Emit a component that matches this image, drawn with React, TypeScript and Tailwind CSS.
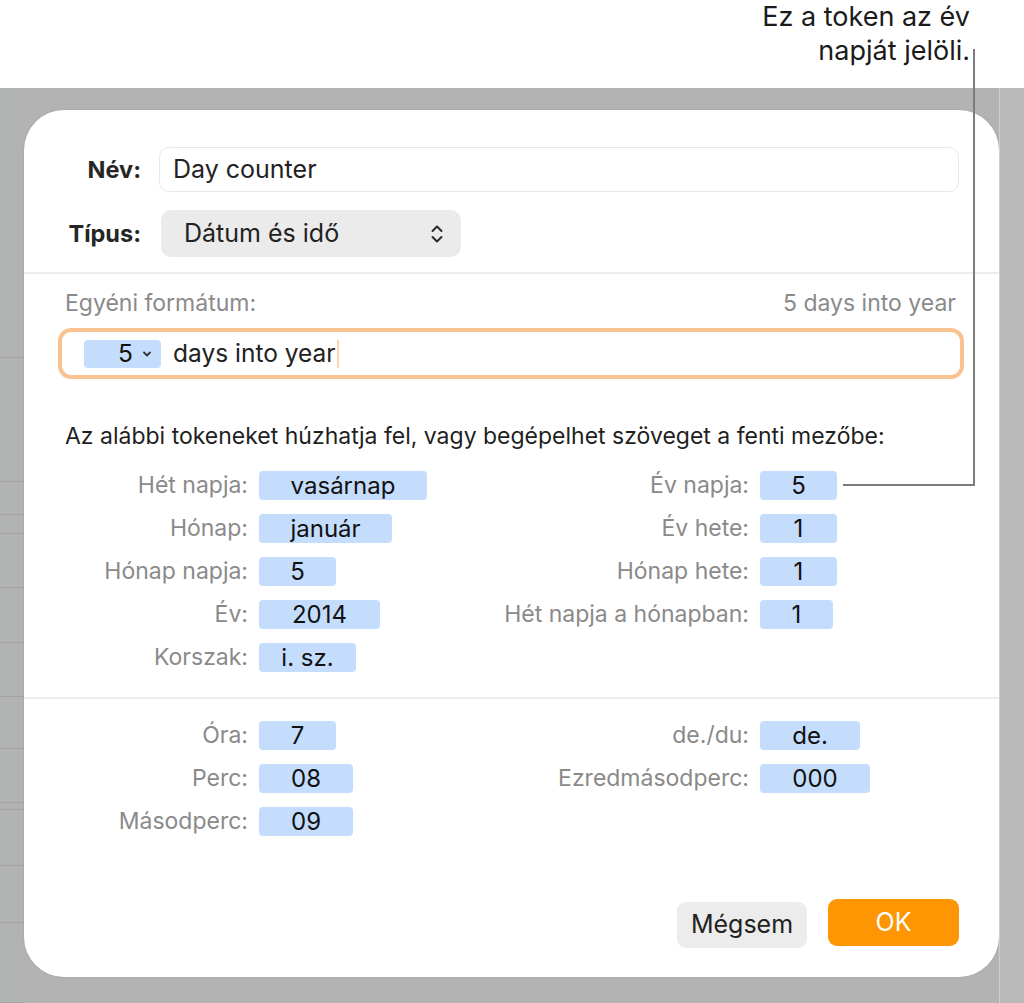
import React from "react";

const font = { fontFamily: "Inter, 'Noto Sans', sans-serif" };

type Row = { label: string; token: string; w: string };

const dateLeft: Row[] = [
  { label: "Hét napja:", token: "vasárnap", w: "w-[168px]" },
  { label: "Hónap:", token: "január", w: "w-[133px]" },
  { label: "Hónap napja:", token: "5", w: "w-[77px]" },
  { label: "Év:", token: "2014", w: "w-[121px]" },
  { label: "Korszak:", token: "i. sz.", w: "w-[97px]" },
];

const dateRight: Row[] = [
  { label: "Év napja:", token: "5", w: "w-[77px]" },
  { label: "Év hete:", token: "1", w: "w-[77px]" },
  { label: "Hónap hete:", token: "1", w: "w-[77px]" },
  { label: "Hét napja a hónapban:", token: "1", w: "w-[73px]" },
];

const timeLeft: Row[] = [
  { label: "Óra:", token: "7", w: "w-[77px]" },
  { label: "Perc:", token: "08", w: "w-[94px]" },
  { label: "Másodperc:", token: "09", w: "w-[94px]" },
];

const timeRight: Row[] = [
  { label: "de./du:", token: "de.", w: "w-[100px]" },
  { label: "Ezredmásodperc:", token: "000", w: "w-[110px]" },
];

// background row lines in the left strip
const stripRows = [270, 124, 33, 19, 54, 55, 54, 52, 54, 7, 56, 57, 80];

function TokenRow({ row, labelW }: { row: Row; labelW: string }) {
  return (
    <div className="flex h-[29px] items-center">
      <div className={`${labelW} shrink-0 whitespace-nowrap text-right text-[23px] leading-[29px] text-[#8a8a8a]`}>
        {row.label}
      </div>
      <div
        className={`ml-[11px] flex h-[29px] ${row.w} items-center justify-center rounded-[4px] bg-[#c4ddfc] text-[24px] leading-[29px] text-[#111]`}
      >
        {row.token}
      </div>
    </div>
  );
}

function TokenColumns({ left, right }: { left: Row[]; right: Row[] }) {
  return (
    <div className="flex">
      <div className="flex w-[480px] flex-col gap-[14px]">
        {left.map((r) => (
          <TokenRow key={r.label} row={r} labelW="w-[224px]" />
        ))}
      </div>
      <div className="flex flex-col gap-[14px]">
        {right.map((r) => (
          <TokenRow key={r.label} row={r} labelW="w-[245px]" />
        ))}
      </div>
    </div>
  );
}

function UpDown() {
  return (
    <svg width="14" height="22" viewBox="0 0 14 22" fill="none" stroke="#2a2a2a" strokeWidth="2" strokeLinecap="round" strokeLinejoin="round">
      <path d="M2.5 8 7 3.5 11.5 8" />
      <path d="M2.5 14 7 18.5 11.5 14" />
    </svg>
  );
}

function SmallDown() {
  return (
    <svg width="10" height="8" viewBox="0 0 10 8" fill="none" stroke="#333" strokeWidth="1.8" strokeLinecap="round" strokeLinejoin="round">
      <path d="M2 2.5 5 5.5 8 2.5" />
    </svg>
  );
}

export default function App() {
  return (
    <div className="relative flex h-[1003px] w-[1024px] flex-col overflow-hidden bg-white" style={font}>
      {/* callout */}
      <div className="flex h-[88px] shrink-0 justify-end pr-[54px]">
        <div className="text-right text-[27px] leading-[34px] text-[#1b1b1b]">
          <div>Ez a token az év</div>
          <div>napját jelöli.</div>
        </div>
      </div>

      {/* background + dialog */}
      <div className="flex flex-1 bg-[#b3b3b3]">
        <div className="flex w-[24px] flex-col bg-[#b1b2b2]">
          {stripRows.map((h, i) => (
            <div key={i} className="border-b border-[#a3a3a3]" style={{ height: h }} />
          ))}
        </div>

        <div className="mt-[22px] flex h-[867px] w-[975px] flex-col rounded-[40px] bg-white shadow-[0_0_2px_rgba(0,0,0,0.15)]">
          {/* name */}
          <div className="mt-[37px] flex h-[45px] items-center">
            <div className="w-[117px] text-right text-[23.5px] font-bold text-[#262626]">Név:</div>
            <div className="ml-[18px] flex h-[45px] w-[800px] items-center rounded-[10px] border border-[#e8e8e8] pl-[13px] text-[25px] text-[#222]">
              Day counter
            </div>
          </div>

          {/* type */}
          <div className="mt-[18px] flex h-[47px] items-center">
            <div className="w-[117px] text-right text-[23.5px] font-bold text-[#262626]">Típus:</div>
            <div className="ml-[20px] flex h-[47px] w-[300px] items-center justify-between rounded-[10px] bg-[#ebebeb] pl-[23px] pr-[17px] text-[25px] text-[#222]">
              <span>Dátum és idő</span>
              <UpDown />
            </div>
          </div>

          <div className="mt-[15px] h-[2px] bg-[#ececec]" />

          {/* format */}
          <div className="mt-[15px] flex h-[28px] items-center justify-between pl-[41px] pr-[43px] text-[23px] leading-[28px] text-[#8a8a8a]">
            <span>Egyéni formátum:</span>
            <span>5 days into year</span>
          </div>

          <div className="ml-[34px] mt-[11px] flex h-[51px] w-[906px] items-center rounded-[13px] border-[4px] border-[#f8c291] pl-[22px]">
            <div className="flex h-[28px] w-[77px] items-center justify-end gap-[9px] rounded-[4px] bg-[#c4ddfc] pr-[9px] text-[24.5px] text-[#111]">
              <span>5</span>
              <SmallDown />
            </div>
            <span className="ml-[12px] text-[24.5px] text-[#222]">days into year</span>
            <span className="ml-[1px] h-[28px] w-[2px] bg-[#fbd3ad]" />
          </div>

          <div className="mt-[43px] h-[28px] whitespace-nowrap pl-[41px] text-[23px] leading-[28px] text-[#1f1f1f]">
            Az alábbi tokeneket húzhatja fel, vagy begépelhet szöveget a fenti mezőbe:
          </div>

          <div className="mt-[21px]">
            <TokenColumns left={dateLeft} right={dateRight} />
          </div>

          <div className="mt-[25px] h-[2px] bg-[#ececec]" />

          <div className="mt-[22px]">
            <TokenColumns left={timeLeft} right={timeRight} />
          </div>

          {/* buttons */}
          <div className="mt-auto mb-[29px] flex items-end justify-end gap-[21px] pr-[40px]">
            <button className="flex h-[46px] w-[130px] items-center justify-center rounded-[9px] bg-[#ececec] text-[25px] text-[#222]">
              Mégsem
            </button>
            <button className="mb-[2px] flex h-[47px] w-[131px] items-center justify-center rounded-[9px] bg-[#fe9503] text-[25px] text-white">
              OK
            </button>
          </div>
        </div>

        <div className="flex-1 border-l border-[#cfcfcf] bg-[#bababa]" />
      </div>

      {/* leader line from callout to token */}
      <div className="absolute left-[973px] top-[49px] h-[437px] w-[2px] bg-[#7d7d7d]" />
      <div className="absolute left-[843px] top-[484px] h-[2px] w-[132px] bg-[#7d7d7d]" />
    </div>
  );
}
